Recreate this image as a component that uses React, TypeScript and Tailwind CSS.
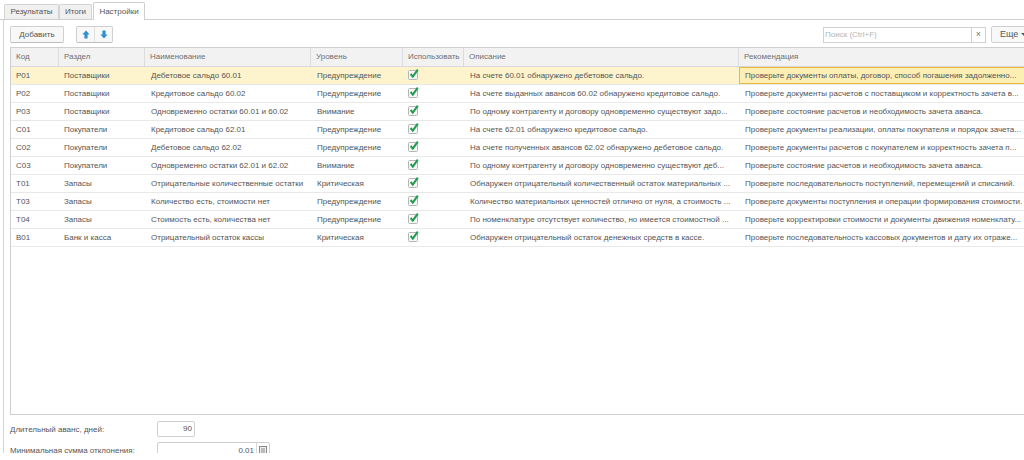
const columns = [
  { title: "Код", width: "w-[48px]" },
  { title: "Раздел", width: "w-[86px]" },
  { title: "Наименование", width: "w-[166px]" },
  { title: "Уровень", width: "w-[92px]" },
  { title: "Использовать", width: "w-[61px]" },
  { title: "Описание", width: "w-[275px]" },
  { title: "Рекомендация", width: "w-[290px]" },
];

const rows = [
  ["Р01", "Поставщики", "Дебетовое сальдо 60.01", "Предупреждение", "На счете 60.01 обнаружено дебетовое сальдо.", "Проверьте документы оплаты, договор, способ погашения задолженно..."],
  ["Р02", "Поставщики", "Кредитовое сальдо 60.02", "Предупреждение", "На счете выданных авансов 60.02 обнаружено кредитовое сальдо.", "Проверьте документы расчетов с поставщиком и корректность зачета в..."],
  ["Р03", "Поставщики", "Одновременно остатки 60.01 и 60.02", "Внимание", "По одному контрагенту и договору одновременно существуют задо...", "Проверьте состояние расчетов и необходимость зачета аванса."],
  ["С01", "Покупатели", "Кредитовое сальдо 62.01", "Предупреждение", "На счете 62.01 обнаружено кредитовое сальдо.", "Проверьте документы реализации, оплаты покупателя и порядок зачета..."],
  ["С02", "Покупатели", "Дебетовое сальдо 62.02", "Предупреждение", "На счете полученных авансов 62.02 обнаружено дебетовое сальдо.", "Проверьте документы расчетов с покупателем и корректность зачета п..."],
  ["С03", "Покупатели", "Одновременно остатки 62.01 и 62.02", "Внимание", "По одному контрагенту и договору одновременно существуют деб...", "Проверьте состояние расчетов и необходимость зачета аванса."],
  ["Т01", "Запасы", "Отрицательные количественные остатки", "Критическая", "Обнаружен отрицательный количественный остаток материальных ...", "Проверьте последовательность поступлений, перемещений и списаний."],
  ["Т03", "Запасы", "Количество есть, стоимости нет", "Предупреждение", "Количество материальных ценностей отлично от нуля, а стоимость ...", "Проверьте документы поступления и операции формирования стоимости."],
  ["Т04", "Запасы", "Стоимость есть, количества нет", "Предупреждение", "По номенклатуре отсутствует количество, но имеется стоимостной ...", "Проверьте корректировки стоимости и документы движения номенклату..."],
  ["В01", "Банк и касса", "Отрицательный остаток кассы", "Критическая", "Обнаружен отрицательный остаток денежных средств в кассе.", "Проверьте последовательность кассовых документов и дату их отраже..."],
];

function CheckMark() {
  return (
    <svg width="11" height="11" viewBox="0 0 11 11" className="block -mt-[2px]">
      <rect x="0.5" y="1.5" width="9" height="9" rx="1" fill="#f7f7f7" stroke="#b5b5b5" />
      <path d="M2.6 5 L4.8 7.6 L9.8 0.6" fill="none" stroke="#1f9d4d" strokeWidth="2" />
    </svg>
  );
}

function ArrowIcon({ down }: { down?: boolean }) {
  return (
    <svg width="8" height="9" viewBox="0 0 10 11" className={down ? "rotate-180" : ""}>
      <path d="M5 0.5 L9.5 5.5 H7 V10.5 H3 V5.5 H0.5 Z" fill="#2f8fd0" />
    </svg>
  );
}

function Cell({ width, text, active, tight }: { width: string; text: string; active?: boolean; tight?: boolean }) {
  return (
    <div
      className={`${width} h-full shrink-0 flex items-center whitespace-nowrap overflow-hidden ${
        active ? "pl-[5px] border border-r-0 border-[#e8b93a] bg-[#fdeeb4]" : tight ? "pl-[5px] pt-px" : "pl-[6px] pt-px"
      }`}
    >
      {text}
    </div>
  );
}

export default function App() {
  return (
    <div className="relative w-[1024px] h-[460px] overflow-hidden bg-white font-['Liberation_Sans',Arial,sans-serif] text-[8px] text-[#555555]">
      <div className="flex items-end h-[20px] pl-[4px] border-b border-[#cfcfcf]">
        <div className="w-[55px] h-[15px] flex items-center justify-center bg-[#f0f0f0] border border-b-0 border-[#d4d4d4] rounded-t-[2px]">Результаты</div>
        <div className="w-[33px] h-[15px] flex items-center justify-center bg-[#f0f0f0] border border-b-0 border-[#d4d4d4] rounded-t-[2px]">Итоги</div>
        <div className="w-[52px] h-[18px] ml-px -mb-px flex items-center justify-center bg-white border border-b-0 border-[#cfcfcf] rounded-t-[2px]">Настройки</div>
      </div>

      <div className="ml-[3px] h-[433px] overflow-hidden border-l border-[#d4d4d4] pl-[6px]">
        <div className="flex items-center h-[27px] pt-[2px]">
          <button className="h-[17px] w-[54px] flex items-center justify-center rounded-[2px] border border-[#d0d0d0] border-b-[#bdbdbd] bg-[#f8f8f8] text-[#555555]">
            Добавить
          </button>
          <div className="ml-[12px] h-[17px] flex rounded-[2px] border border-[#d0d0d0] border-b-[#bdbdbd] bg-[#f8f8f8]">
            <div className="w-[18px] flex items-center justify-center border-r border-[#e0e0e0]"><ArrowIcon /></div>
            <div className="w-[17px] flex items-center justify-center"><ArrowIcon down /></div>
          </div>
          <div className="ml-auto flex items-center">
            <div className="w-[149px] h-[16px] flex items-center pl-px border border-[#d0d0d0] text-[#b5b5b5] bg-white">Поиск (Ctrl+F)</div>
            <div className="w-[14px] h-[16px] flex items-center justify-center border border-l-0 border-[#d0d0d0] text-[#777] text-[9px]">×</div>
            <button className="ml-[5px] w-[40px] h-[17px] flex items-center pl-[8px] -mr-[7px] gap-[3px] border border-[#d0d0d0] rounded-[2px] bg-[#f8f8f8] text-[9px] text-[#555555] overflow-hidden">
              Еще
              <span className="w-0 h-0 border-x-[3px] border-x-transparent border-t-[3px] border-t-[#555]" />
            </button>
          </div>
        </div>

        <div className="w-[1021px] h-[368px] border border-[#cfcfcf] border-r-0 overflow-hidden">
          <div className="flex h-[19px] bg-[#f2f2f2] border-b border-[#d9d9d9] text-[#707070]">
            {columns.map((col) => (
              <div key={col.title} className={`${col.width} shrink-0 flex items-center pl-[5px] border-r border-[#dcdcdc] whitespace-nowrap`}>
                {col.title}
              </div>
            ))}
          </div>
          {rows.map((row, i) => (
            <div
              key={row[0]}
              className={`flex h-[18px] border-b border-[#e8e8e8] ${i === 0 ? "bg-[#fdf3cd]" : "bg-white"}`}
            >
              <Cell width={columns[0].width} text={row[0]} tight />
              <Cell width={columns[1].width} text={row[1]} tight />
              <Cell width={columns[2].width} text={row[2]} />
              <Cell width={columns[3].width} text={row[3]} />
              <div className={`${columns[4].width} shrink-0 flex items-center pl-[5px]`}>
                <CheckMark />
              </div>
              <Cell width={columns[5].width} text={row[4]} />
              <Cell width={columns[6].width} text={row[5]} active={i === 0} />
            </div>
          ))}
        </div>

        <div className="flex items-center h-[16px] mt-[6px]">
          <span className="w-[147px] pt-px whitespace-nowrap">Длительный аванс, дней:</span>
          <div className="w-[38px] h-[16px] flex items-center justify-end pr-[2px] border border-[#cfcfcf] rounded-[2px]">90</div>
        </div>
        <div className="flex items-center h-[17px] mt-[5px]">
          <span className="w-[147px] whitespace-nowrap">Минимальная сумма отклонения:</span>
          <div className="w-[113px] h-[17px] flex border border-[#cfcfcf] rounded-[2px]">
            <div className="flex-1 flex items-center justify-end pr-[2px]">0.01</div>
            <div className="w-[13px] flex items-center justify-center border-l border-[#d9d9d9]">
              <svg width="8" height="9" viewBox="0 0 8 9">
                <rect x="0.5" y="0.5" width="7" height="8" fill="#eee" stroke="#888" />
                <path d="M2 3 H6 M2 5 H6 M2 7 H6" stroke="#888" />
              </svg>
            </div>
          </div>
        </div>
      </div>
    </div>
  );
}
